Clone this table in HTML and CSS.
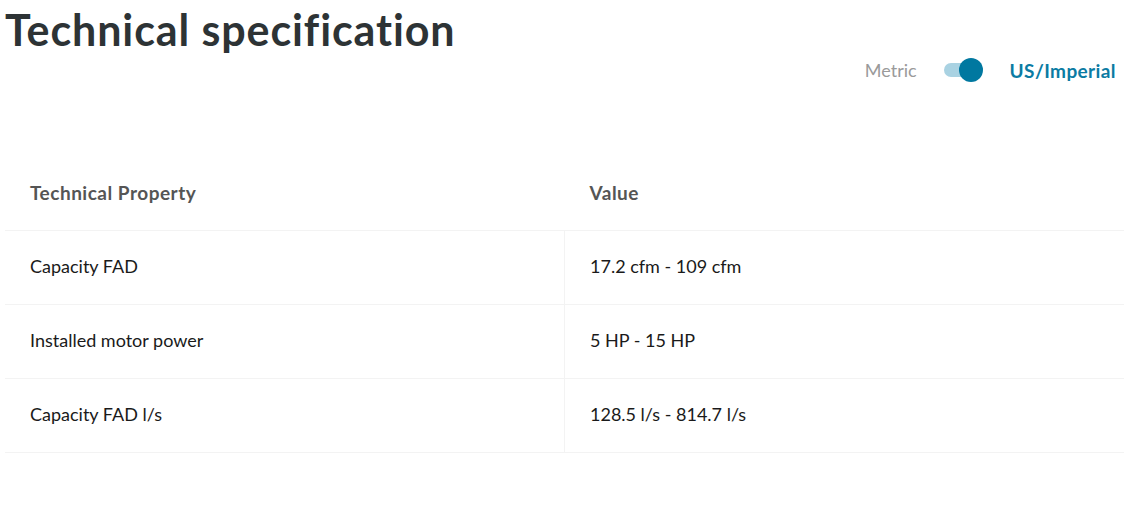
FILE: index.html
```html
<!DOCTYPE html>
<html>
<head>
<meta charset="utf-8">
<link rel="stylesheet" href="styles.css">
</head>
<body>
<div class="page">
  <h1 class="title">Technical specification</h1>
  <div class="units">
    <span class="unit unit-off">Metric</span>
    <span class="switch"><span class="knob"></span></span>
    <span class="unit unit-on">US/Imperial</span>
  </div>
  <table class="spec">
    <thead>
      <tr><th>Technical Property</th><th>Value</th></tr>
    </thead>
    <tbody>
      <tr><td>Capacity FAD</td><td>17.2 cfm - 109 cfm</td></tr>
      <tr><td>Installed motor power</td><td>5 HP - 15 HP</td></tr>
      <tr><td>Capacity FAD l/s</td><td>128.5 l/s - 814.7 l/s</td></tr>
    </tbody>
  </table>
</div>
</body>
</html>
```

FILE: styles.css
```css
html, body { margin: 0; padding: 0; background: #fff; }
body {
  font-family: Lato, "Liberation Sans", sans-serif;
  color: #1a1a1a;
  font-variant-ligatures: none;
}
.page { padding: 0 19px 0 5px; }
.title {
  margin: 0;
  padding-top: 6px;
  font-size: 43px;
  line-height: 48px;
  font-weight: 700;
  letter-spacing: 0.9px;
  color: #2d3335;
}
.units {
  display: flex;
  justify-content: flex-end;
  align-items: center;
  gap: 27px;
  margin-top: 1px;
  padding-right: 8px;
  height: 30px;
}
.unit { font-size: 18px; }
.unit-off { color: #9a9a9a; }
.unit-on { color: #0b7ba3; font-weight: 700; font-size: 19px; letter-spacing: 0.4px; }
.switch {
  position: relative;
  width: 33px;
  height: 14px;
  border-radius: 7px;
  background: #a9d2e2;
  margin-right: 6px;
}
.knob {
  position: absolute;
  right: -6px;
  top: -5px;
  width: 24px;
  height: 24px;
  border-radius: 50%;
  background: #0078a0;
}
.spec {
  margin-top: 72px;
  width: 1119px;
  border-collapse: collapse;
  font-size: 18px;
}
.spec th, .spec td {
  text-align: left;
  height: 73px;
  padding: 0 0 0 25px;
  border-bottom: 1px solid #f3f3f3;
}
.spec td { padding-bottom: 3px; height: 70px; }
.spec th {
  font-weight: 700;
  font-size: 19px;
  letter-spacing: 0.5px;
  color: #555;
  padding-bottom: 2px;
  height: 71px;
}
.spec th:first-child, .spec td:first-child { width: 534px; }
.spec td:first-child { border-right: 1px solid #f3f3f3; }
.spec td { color: #1a1a1a; }
```
